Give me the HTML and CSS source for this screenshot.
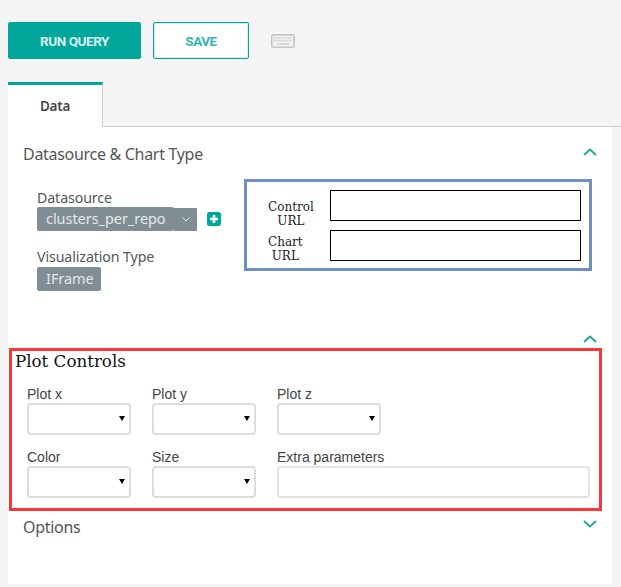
FILE: index.html
```html
<!DOCTYPE html>
<html>
<head>
    <title>Explore</title>
    <link rel="stylesheet" href="styles.css">
</head>
<body>
<div class="toolbar">
    <button type="button" class="btn btn-run">RUN QUERY</button>
    <button type="button" class="btn btn-save">SAVE</button>
    <svg class="keys" width="24" height="14" viewBox="0 0 24 14">
        <rect x="0.75" y="0.75" width="22.5" height="12.5" rx="1.5" fill="#f0f0f0" stroke="#c4c4c4" stroke-width="1.5"/>
        <path d="M3 4h18M3 6.8h18" stroke="#cfcfcf" stroke-width="1.4" stroke-dasharray="1.4 .8"/>
        <path d="M6 10h12" stroke="#cfcfcf" stroke-width="1.4"/>
    </svg>
</div>

<div class="tabs">
    <div class="tab">Data</div>
</div>

<div class="panel">
    <div class="section-head">
        <h4 class="section-title">Datasource &amp; Chart Type</h4>
        <svg class="chev" width="14" height="8" viewBox="0 0 14 8"><path d="M1 7l6-5.5L13 7" fill="none" stroke="#1fa8a0" stroke-width="2"/></svg>
    </div>

    <div class="source-row">
        <div class="source-col">
            <label class="field-label">Datasource</label>
            <div class="picker">
                <span class="pill pill-source">clusters_per_repo</span>
                <span class="pill-caret">
                    <svg width="8" height="5" viewBox="0 0 8 5"><path d="M.5.5L4 4 7.5.5" fill="none" stroke="#dfe4e6" stroke-width="1"/></svg>
                </span>
                <svg class="plus" width="14" height="14" viewBox="0 0 14 14">
                    <rect width="14" height="14" rx="2.5" fill="#00a699"/>
                    <path d="M7 3v8M3 7h8" stroke="#fff" stroke-width="2.6"/>
                </svg>
            </div>
            <label class="field-label label-viz">Visualization Type</label>
            <span class="pill pill-viz">IFrame</span>
        </div>

        <div class="url-box">
            <div class="url-row">
                <label class="url-label"><span class="url-text">Control<br>URL</span></label>
                <input type="text" class="url-input">
            </div>
            <div class="url-row">
                <label class="url-label url-label-up"><span class="url-text">Chart<br>URL</span></label>
                <input type="text" class="url-input">
            </div>
        </div>
    </div>

    <div class="plot-chev">
        <svg class="chev" width="14" height="8" viewBox="0 0 14 8"><path d="M1 7l6-5.5L13 7" fill="none" stroke="#1fa8a0" stroke-width="2"/></svg>
    </div>

    <div class="plot-box">
        <div class="plot-title">Plot Controls</div>
        <div class="plot-grid">
            <div><label class="plot-label">Plot x</label><div class="select-wrap"><select class="plot-select"></select></div></div>
            <div><label class="plot-label">Plot y</label><div class="select-wrap"><select class="plot-select"></select></div></div>
            <div><label class="plot-label">Plot z</label><div class="select-wrap"><select class="plot-select"></select></div></div>
            <div class="spacer"></div>
            <div><label class="plot-label">Color</label><div class="select-wrap"><select class="plot-select"></select></div></div>
            <div><label class="plot-label">Size</label><div class="select-wrap"><select class="plot-select"></select></div></div>
            <div class="extra"><label class="plot-label">Extra parameters</label><input type="text" class="plot-input"></div>
        </div>
    </div>

    <div class="section-head options-head">
        <h4 class="section-title">Options</h4>
        <svg class="chev chev-down" width="14" height="8" viewBox="0 0 14 8"><path d="M1 1l6 5.5L13 1" fill="none" stroke="#1fa8a0" stroke-width="2"/></svg>
    </div>
</div>
</body>
</html>
```

FILE: styles.css
```css
body {
    margin: 0;
    height: 587px;
    overflow: hidden;
    background-color: #f5f5f5;
    font-family: "Noto Sans", sans-serif;
    color: #484848;
}

.toolbar {
    display: flex;
    align-items: flex-start;
    padding: 22px 0 0 8px;
    height: 38px;
}

.btn {
    height: 37px;
    border-radius: 2px;
    font-family: Roboto, sans-serif;
    font-size: 13.5px;
    font-weight: 700;
    letter-spacing: -0.45px;
    padding: 0;
}

.btn-run {
    width: 133px;
    background-color: #00a699;
    border: 1px solid #00a699;
    color: #d9f2ef;
}

.btn-save {
    width: 96px;
    margin-left: 12px;
    background-color: #fff;
    border: 1px solid #00a699;
    box-shadow: inset 0 0 0 1px #d5efec;
    color: #35b5aa;
}

.keys {
    margin-left: 22px;
    margin-top: 12px;
}

.tabs {
    margin-top: 22px;
    height: 44px;
    margin-left: 8px;
    border-bottom: 1px solid #ccc;
}

.tab {
    width: 95px;
    height: 45px;
    box-sizing: border-box;
    background-color: #fff;
    border-top: 3px solid #00a699;
    border-right: 1px solid #ccc;
    text-align: center;
    font-size: 13.5px;
    font-weight: 600;
    line-height: 43px;
    letter-spacing: -0.3px;
}

.panel {
    margin: 0 9px 0 8px;
    height: 457px;
    background-color: #fff;
}

.section-head {
    display: flex;
    justify-content: space-between;
    padding: 16px 15px 0 15px;
}

.section-title {
    margin: 0;
    font-size: 16px;
    font-weight: 400;
    line-height: 22px;
    color: #555;
    letter-spacing: -0.3px;
}

.chev {
    display: block;
    margin-top: 5px;
}

.chev-down {
    margin-top: 4px;
}

.source-row {
    display: flex;
    margin-top: 14px;
}

.source-col {
    width: 236px;
    padding: 10px 0 0 29px;
    box-sizing: border-box;
}

.field-label {
    display: block;
    font-size: 14.2px;
    line-height: 18px;
    color: #555;
    letter-spacing: -0.1px;
}

.label-viz {
    margin-top: 17px;
    margin-bottom: 1px;
}

.picker {
    display: flex;
    align-items: center;
}

.pill {
    display: inline-block;
    box-sizing: border-box;
    height: 24px;
    line-height: 23px;
    font-size: 14.4px;
    background-color: #818d94;
    color: #e4e8ea;
    border-radius: 2px;
}

.pill-source {
    width: 137px;
    padding-left: 9px;
}

.pill-caret {
    display: flex;
    align-items: center;
    justify-content: center;
    width: 23px;
    height: 23px;
    background-color: #818d94;
}

.plus {
    margin-left: 10px;
}

.pill-viz {
    width: 64px;
    padding-left: 9px;
}

.url-box {
    width: 348px;
    height: 92px;
    box-sizing: border-box;
    border: 3px solid #6f8fbf;
    padding: 8px 8px 0 21px;
    font-family: "DejaVu Serif", serif;
    font-size: 12px;
    color: #222;
}

.url-row {
    display: flex;
    align-items: flex-start;
    height: 40px;
}

.url-label {
    display: block;
    width: 62px;
    line-height: 14px;
    margin-top: 10px;
}

.url-label-up {
    margin-top: 5px;
}

.url-text {
    display: inline-block;
    text-align: center;
}

.url-input {
    width: 251px;
    height: 31px;
    box-sizing: border-box;
    border: 1px solid #000;
    background-color: #fff;
    padding: 0;
    border-radius: 0;
    outline: none;
}

.plot-chev {
    display: flex;
    justify-content: flex-end;
    padding: 0 15px;
    height: 18px;
    margin-top: 39px;
}

.plot-box {
    box-sizing: border-box;
    width: 593px;
    height: 163px;
    margin-left: 1px;
    border: 3px solid #fb3535;
    padding: 0 3px;
}

.plot-title {
    font-family: "DejaVu Serif", serif;
    font-size: 16.7px;
    font-weight: 400;
    line-height: 20px;
    color: #111;
}

.plot-grid {
    display: grid;
    grid-template-columns: 104px 104px 104px 1fr;
    column-gap: 21px;
    row-gap: 15px;
    padding: 16px 9px 0 12px;
}

.plot-label {
    display: block;
    font-family: "Liberation Sans", sans-serif;
    font-size: 14px;
    line-height: 15px;
    margin-bottom: 1px;
    color: #444;
}

.select-wrap {
    position: relative;
    width: 104px;
}

.select-wrap::after {
    content: "";
    position: absolute;
    top: 13px;
    right: 6px;
    border-left: 3px solid transparent;
    border-right: 3px solid transparent;
    border-top: 5px solid #000;
}

.plot-select {
    display: block;
    width: 104px;
    height: 32px;
    box-sizing: border-box;
    appearance: none;
    background-color: #fff;
    border: 2px solid #dcdcdc;
    border-radius: 4px;
}

.extra {
    grid-column: 3 / span 2;
}

.plot-input {
    display: block;
    width: 313px;
    height: 32px;
    box-sizing: border-box;
    background-color: #fff;
    border: 2px solid #e3e3e3;
    border-radius: 4px;
    outline: none;
}

.options-head {
    padding-top: 5px;
}
```
